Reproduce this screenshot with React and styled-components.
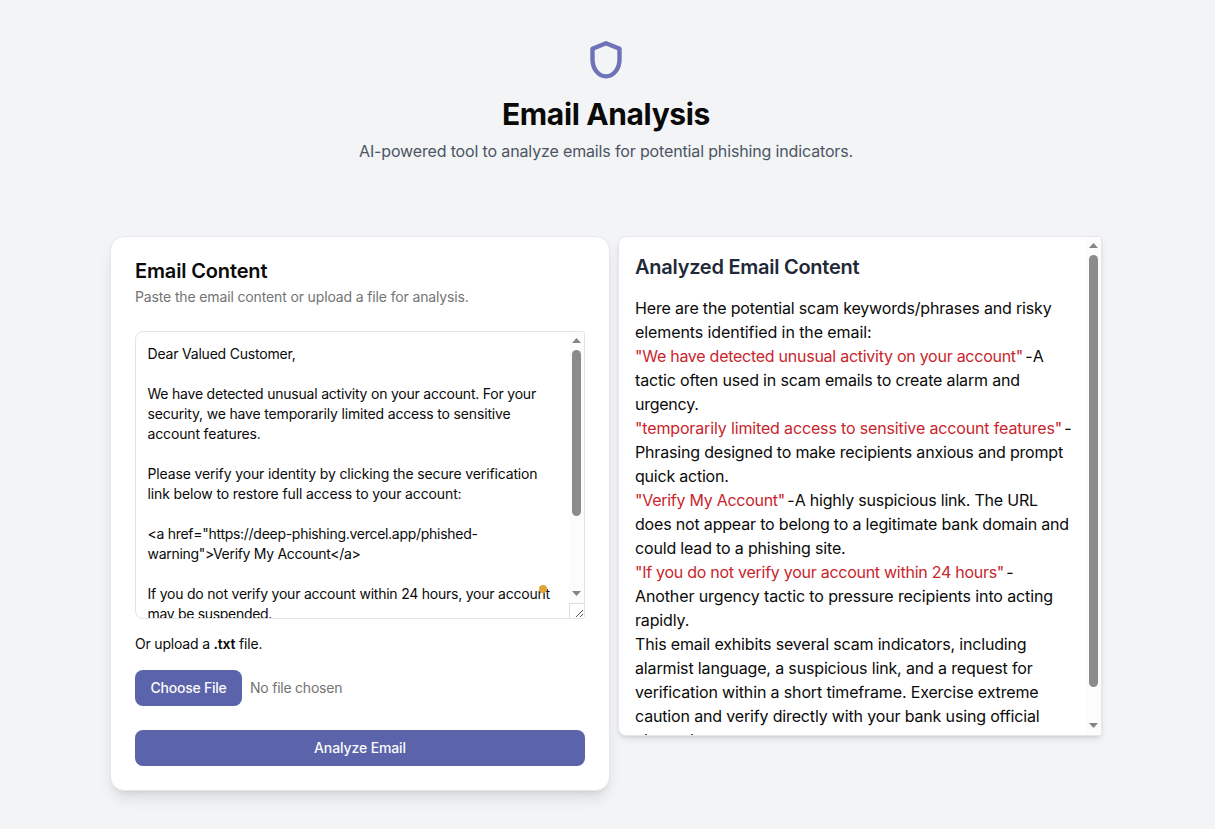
import React from "react";
import styled, { createGlobalStyle } from "styled-components";

const GlobalStyle = createGlobalStyle`
  *, *::before, *::after { box-sizing: border-box; }
  html, body { margin: 0; background: #f3f4f6; }
  body {
    font-family: Inter, "Liberation Sans", sans-serif;
    font-size: 16px;
    line-height: 24px;
    color: #0a0a0a;
    overflow: hidden;
  }
  h1, h2, p { margin: 0; }
`;

const Page = styled.main`
  width: 992px;
  height: 829px;
  margin-left: 110px;
  padding-top: 36px;
`;

const Header = styled.header`
  display: flex;
  flex-direction: column;
  align-items: center;
  height: 200px;
`;

const ShieldIcon = styled.svg`
  width: 48px;
  height: 48px;
  fill: none;
  stroke: #6e73b7;
  stroke-width: 4.4;
  stroke-linejoin: round;
`;

const Title = styled.h1`
  margin-top: 12px;
  font-size: 30px;
  line-height: 36px;
  font-weight: 700;
  letter-spacing: -0.36px;
`;

const Subtitle = styled.p`
  margin-top: 7px;
  line-height: 24px;
  letter-spacing: -0.146px;
  color: #4b5563;
`;

const Columns = styled.div`
  display: flex;
  align-items: flex-start;
  gap: 8px;
`;

const Card = styled.section`
  width: 500px;
  height: 555px;
  padding: 24px;
  background: #fff;
  border: 1px solid #e5e7eb;
  border-radius: 14px;
  box-shadow: 0 10px 15px -3px rgba(0, 0, 0, 0.1), 0 4px 6px -4px rgba(0, 0, 0, 0.1);
`;

const CardTitle = styled.h2`
  font-size: 20px;
  line-height: 20px;
  font-weight: 600;
  letter-spacing: -0.15px;
`;

const CardHint = styled.p`
  margin-top: 6px;
  font-size: 14px;
  line-height: 20px;
  letter-spacing: -0.14px;
  color: #737373;
`;

const Line = styled.span`
  display: block;
  white-space: pre;
  letter-spacing: ${(p) => p.$track ?? 0}px;
  min-height: 1lh;
`;

const Flagged = styled.span`
  color: #c9252d;
  letter-spacing: ${(p) => p.$track}px;
`;

const Dash = styled.span`
  letter-spacing: -2.2px;
`;

const EmailBox = styled.div`
  position: relative;
  display: flex;
  justify-content: space-between;
  height: 288px;
  margin-top: 24px;
  border: 1px solid #e2e4e7;
  border-radius: 8px 3px 3px 8px;
  overflow: hidden;
`;

const EmailText = styled.div`
  padding: 12px 0 0 11.5px;
  font-size: 14px;
  line-height: 20px;
  height: 286px;
`;

const Gutter = styled.div`
  display: flex;
  flex-direction: column;
  align-items: center;
  flex: none;
  width: 15px;
  background: #fcfcfc;
`;

const EmailGutter = styled(Gutter)`
  height: 286px;
  padding-top: 6px;
`;

const Arrow = styled.svg`
  display: block;
  flex: none;
  width: 9px;
  height: 5px;
  fill: #858585;
  transform: ${(p) => (p.$down ? "rotate(180deg)" : "none")};
`;

const Thumb = styled.div`
  flex: none;
  width: 9px;
  height: ${(p) => p.$size}px;
  margin: ${(p) => p.$top}px 0 ${(p) => p.$bottom}px;
  border-radius: 5px;
  background: #8b8b8b;
`;

const Resizer = styled.svg`
  display: block;
  flex: none;
  width: 15px;
  height: 15px;
  margin-top: 7px;
  background: #fff;
  border-top: 1px solid #dcdcdc;
  border-left: 1px solid #dcdcdc;
`;

const StatusDot = styled.i`
  position: absolute;
  left: 403px;
  top: 253px;
  width: 8px;
  height: 8px;
  border-radius: 50%;
  background: #e2a336;
`;

const UploadHint = styled.p`
  margin-top: 15px;
  font-size: 14px;
  line-height: 20px;
  white-space: pre;
  letter-spacing: -0.19px;

  b { font-weight: 600; }
`;

const UploadRow = styled.div`
  display: flex;
  align-items: center;
  gap: 8px;
  margin-top: 16px;
`;

const Button = styled.button`
  width: ${(p) => p.$width};
  height: 36px;
  padding: 0;
  border: 0;
  border-radius: 8px;
  background: #5b64aa;
  color: #fafafa;
  font: 500 14px/20px Inter, "Liberation Sans", sans-serif;
  letter-spacing: ${(p) => p.$track}px;
`;

const FileName = styled.span`
  font-size: 14px;
  line-height: 20px;
  letter-spacing: -0.23px;
  color: #737373;
`;

const AnalyzeRow = styled.div`
  margin-top: 24px;
`;

const Panel = styled.section`
  display: flex;
  justify-content: space-between;
  width: 484px;
  height: 500px;
  background: #fff;
  border: 1px solid #e5e7eb;
  border-radius: 8px 2px 2px 8px;
  box-shadow: 0 4px 6px -1px rgba(0, 0, 0, 0.1), 0 2px 4px -2px rgba(0, 0, 0, 0.1);
  overflow: hidden;
`;

const PanelBody = styled.div`
  height: 498px;
  padding: 16px 0 0 16px;
`;

const PanelTitle = styled.h2`
  margin-bottom: 15px;
  font-size: 20px;
  line-height: 28px;
  font-weight: 600;
  letter-spacing: -0.26px;
  color: #1f2937;
`;

const PanelGutter = styled(Gutter)`
  padding-top: 6px;
`;

const emailLines = [
  ["Dear Valued Customer,", -0.2],
  [""],
  ["We have detected unusual activity on your account. For your", -0.212],
  ["security, we have temporarily limited access to sensitive", -0.162],
  ["account features.", -0.15],
  [""],
  ["Please verify your identity by clicking the secure verification", -0.137],
  ["link below to restore full access to your account:", -0.125],
  [""],
  ['<a href="https://deep-phishing.vercel.app/phished-', -0.284],
  ['warning">Verify My Account</a>', -0.295],
  [""],
  ["If you do not verify your account within 24 hours, your account", -0.226],
  ["may be suspended.", -0.31],
];

const findings = [
  { text: "Here are the potential scam keywords/phrases and risky", track: -0.167 },
  { text: "elements identified in the email:", track: -0.087 },
  { flag: '"We have detected unusual activity on your account"', flagTrack: -0.262, dash: true, text: "A" },
  { text: "tactic often used in scam emails to create alarm and", track: -0.163 },
  { text: "urgency.", track: -0.25 },
  { flag: '"temporarily limited access to sensitive account features"', flagTrack: -0.149, dash: true },
  { text: "Phrasing designed to make recipients anxious and prompt", track: -0.183 },
  { text: "quick action.", track: -0.22 },
  { flag: '"Verify My Account"', flagTrack: -0.269, dash: true, text: "A highly suspicious link. The URL", track: -0.23 },
  { text: "does not appear to belong to a legitimate bank domain and", track: -0.18 },
  { text: "could lead to a phishing site.", track: -0.173 },
  { flag: '"If you do not verify your account within 24 hours"', flagTrack: -0.268, dash: true },
  { text: "Another urgency tactic to pressure recipients into acting", track: -0.114 },
  { text: "rapidly.", track: -0.15 },
  { text: "This email exhibits several scam indicators, including", track: -0.163 },
  { text: "alarmist language, a suspicious link, and a request for", track: -0.15 },
  { text: "verification within a short timeframe. Exercise extreme", track: -0.141 },
  { text: "caution and verify directly with your bank using official", track: -0.158 },
  { text: "channels.", track: -0.15 },
];

function ScrollArrow({ down }) {
  return (
    <Arrow viewBox="0 0 9 5" $down={down}>
      <path d="M4.5 0L9 5H0Z" />
    </Arrow>
  );
}

export default function App() {
  return (
    <>
      <GlobalStyle />
      <Page>
        <Header>
          <ShieldIcon viewBox="0 0 48 48">
            <path d="M24 7.2L37.5 12.8V23.2C37.5 32.5 31.8 40.4 24 40.4C16.2 40.4 10.5 32.5 10.5 23.2V12.8Z" />
          </ShieldIcon>
          <Title>Email Analysis</Title>
          <Subtitle>AI-powered tool to analyze emails for potential phishing indicators.</Subtitle>
        </Header>
        <Columns>
          <Card>
            <CardTitle>Email Content</CardTitle>
            <CardHint>Paste the email content or upload a file for analysis.</CardHint>
            <EmailBox>
              <EmailText>
                {emailLines.map(([text, track], i) => (
                  <Line key={i} $track={track}>{text}</Line>
                ))}
              </EmailText>
              <EmailGutter>
                <ScrollArrow />
                <Thumb $size={166} $top={7} $bottom={75} />
                <ScrollArrow down />
                <Resizer viewBox="0 0 14 14" stroke="#555" strokeWidth="1">
                  <path d="M6 13L13 6M10 13L13 10" />
                </Resizer>
              </EmailGutter>
              <StatusDot />
            </EmailBox>
            <UploadHint>Or upload a <b>.txt</b> file.</UploadHint>
            <UploadRow>
              <Button $width="107px" $track={-0.24}>Choose File</Button>
              <FileName>No file chosen</FileName>
            </UploadRow>
            <AnalyzeRow>
              <Button $width="100%" $track={-0.12}>Analyze Email</Button>
            </AnalyzeRow>
          </Card>
          <Panel>
            <PanelBody>
              <PanelTitle>Analyzed Email Content</PanelTitle>
              {findings.map((f, i) => (
                <Line key={i} $track={f.track}>
                  {f.flag && <Flagged $track={f.flagTrack}>{f.flag}</Flagged>}
                  {f.dash && <Dash>{" - "}</Dash>}
                  {f.text}
                </Line>
              ))}
            </PanelBody>
            <PanelGutter>
              <ScrollArrow />
              <Thumb $size={432} $top={7} $bottom={36} />
              <ScrollArrow down />
            </PanelGutter>
          </Panel>
        </Columns>
      </Page>
    </>
  );
}
